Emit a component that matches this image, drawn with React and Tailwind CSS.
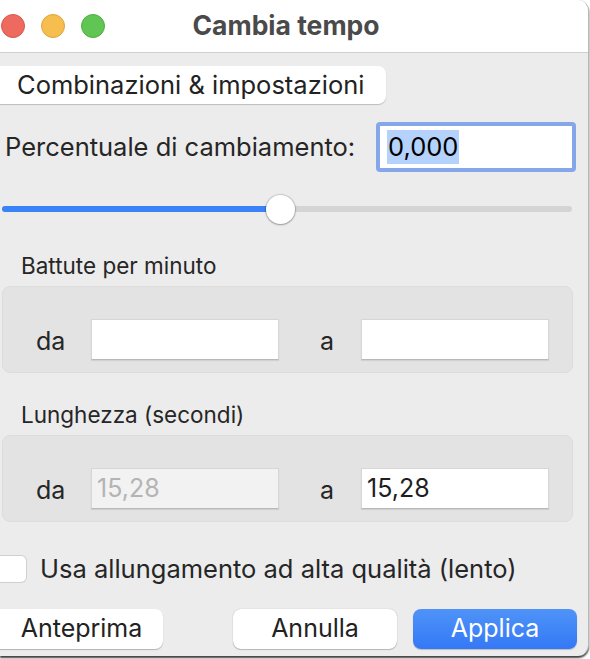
import React from "react";

const font = { fontFamily: "Inter, 'Noto Sans', sans-serif" };

function Field({ value, disabled }) {
  return (
    <div
      className={
        "h-[41px] w-[188px] flex items-center px-[5px] text-[25px] border border-[#d6d6d6] border-b-[#b8b8b8] shadow-[0_1px_1px_rgba(0,0,0,0.08)] " +
        (disabled ? "bg-[#f2f2f2] text-[#b4b4b4]" : "bg-white text-[#1f1f1f]")
      }
    >
      {value}
    </div>
  );
}

function Group({ label, from, to, fromDisabled }) {
  return (
    <>
      <div className="ml-[21px] text-[22.5px] leading-[26px] text-[#262626]">{label}</div>
      <div className="mt-[7px] ml-[2px] w-[571px] h-[87px] rounded-[8px] bg-[#e3e3e3] border border-[#dcdcdc] flex items-start pt-[32px]">
        <span className="ml-[33px] w-[55px] text-[25px] leading-[41px] text-[#262626] pt-[2px]">da</span>
        <Field value={from} disabled={fromDisabled} />
        <span className="ml-[41px] w-[41px] text-[25px] leading-[41px] text-[#262626] pt-[2px]">a</span>
        <Field value={to} />
      </div>
    </>
  );
}

export default function App() {
  return (
    <div className="w-[590px] h-[659px] bg-white overflow-hidden" style={font}>
      <div className="w-[589px] h-[656px] bg-[#ececec] rounded-tr-[11px] rounded-br-[11px] border-r border-[#b8b8b8] shadow-[0_2px_2px_rgba(0,0,0,0.75)] overflow-hidden flex flex-col">
        {/* title bar */}
        <div className="h-[53px] bg-white border-b border-[#cfcfcf] flex items-center relative shrink-0">
          <div className="flex items-center gap-[16px] ml-[1px]">
            <div className="w-[24px] h-[24px] rounded-full bg-[#ee6a5f] border border-[#d9564b]" />
            <div className="w-[24px] h-[24px] rounded-full bg-[#f5be4f] border border-[#dea43a]" />
            <div className="w-[24px] h-[24px] rounded-full bg-[#61c554] border border-[#4fae42]" />
          </div>
          <div className="absolute left-0 right-[16px] text-center text-[26.5px] font-bold text-[#4a4a4a]">
            Cambia tempo
          </div>
        </div>

        {/* Combinazioni button */}
        <div className="mt-[13px] w-[386px] h-[38px] bg-white rounded-r-[8px] shadow-[0_1px_1px_rgba(0,0,0,0.2)] flex items-center pl-[17px] text-[25.5px] text-[#222]">
          Combinazioni &amp; impostazioni
        </div>

        {/* Percent row */}
        <div className="mt-[18px] h-[50px] flex items-center">
          <span className="ml-[5px] text-[25.5px] text-[#262626]">Percentuale di cambiamento:</span>
          <div className="ml-auto mr-[12px] w-[200px] h-[50px] rounded-[4px] bg-[#86a6ea] p-[4px]">
            <div className="w-full h-full bg-white flex items-center pl-[7px]">
              <span className="bg-[#b4d2fb] text-[25.5px] leading-[34px] text-black px-[1px]">0,000</span>
            </div>
          </div>
        </div>

        {/* slider */}
        <div className="mt-[23px] h-[28px] relative ml-[2px] w-[570px] flex items-center">
          <div className="w-full h-[6px] rounded-full bg-[#d4d4d4] overflow-hidden">
            <div className="h-full w-[278px] bg-[#3a82f7]" />
          </div>
          <div className="absolute left-[264px] top-0 w-[29px] h-[29px] rounded-full bg-white shadow-[0_0_1px_1px_rgba(0,0,0,0.15),0_1px_2px_rgba(0,0,0,0.25)]" />
        </div>

        <div className="mt-[30px]">
          <Group label="Battute per minuto" from="" to="" />
        </div>
        <div className="mt-[29px]">
          <Group label="Lunghezza (secondi)" from="15,28" to="15,28" fromDisabled />
        </div>

        {/* checkbox */}
        <div className="mt-[33px] flex items-center h-[28px]">
          <div className="w-[27px] h-[28px] rounded-r-[6px] bg-white border border-[#cfcfcf] border-l-0" />
          <span className="ml-[13px] text-[25.5px] text-[#262626]">Usa allungamento ad alta qualità (lento)</span>
        </div>

        {/* buttons */}
        <div className="mt-[26px] flex items-center">
          <div className="w-[163px] h-[40px] bg-white rounded-r-[8px] shadow-[0_1px_1px_rgba(0,0,0,0.25)] flex items-center justify-center text-[25px] text-[#222]">
            Anteprima
          </div>
          <div className="ml-[70px] w-[164px] h-[40px] bg-white rounded-[8px] shadow-[0_0_1px_rgba(0,0,0,0.3),0_1px_1px_rgba(0,0,0,0.2)] flex items-center justify-center text-[25px] text-[#222]">
            Annulla
          </div>
          <div className="ml-[16px] w-[164px] h-[40px] rounded-[8px] bg-gradient-to-b from-[#4f93f8] to-[#3478f6] shadow-[0_1px_1px_rgba(0,0,0,0.2)] flex items-center justify-center text-[25px] text-white">
            Applica
          </div>
        </div>
      </div>
    </div>
  );
}
